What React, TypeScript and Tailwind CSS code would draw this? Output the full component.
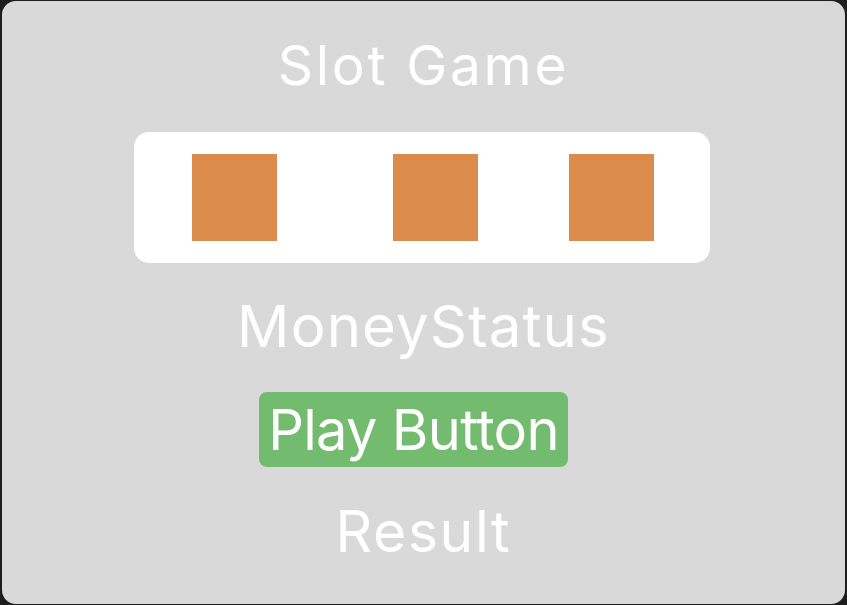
const Reel = () => <div className="w-[85px] h-[87px] bg-[#db8b4b]" />;

export default function App() {
  return (
    <div className="w-[847px] h-[605px] bg-[#1e1e1e] pt-px pb-px pl-[2px] pr-[2px] font-['Inter',sans-serif]">
      <div className="h-full w-full rounded-[14px] bg-[#d9d9d9] flex flex-col items-center text-white">
        <h1 className="mt-[37px] text-[55px] leading-[55px] tracking-[2.7px] font-normal">Slot Game</h1>

        <div className="mt-[39px] self-start ml-[132px] w-[576px] h-[131px] bg-white rounded-[15px] flex items-center">
          <div className="ml-[58px]">
            <Reel />
          </div>
          <div className="ml-[116px]">
            <Reel />
          </div>
          <div className="ml-[91px]">
            <Reel />
          </div>
        </div>

        <div className="mt-[34px] text-[58px] leading-[58px] tracking-[1.2px]">MoneyStatus</div>

        <button className="mt-[37px] self-start ml-[257px] w-[309px] h-[75px] pt-[10px] rounded-[8px] bg-[#73bb6e] text-white text-[56px] leading-[56px] tracking-[-0.7px] flex justify-center items-start">
          Play Button
        </button>

        <div className="mt-[36px] text-[57px] leading-[57px] tracking-[1.6px]">Result</div>
      </div>
    </div>
  );
}
